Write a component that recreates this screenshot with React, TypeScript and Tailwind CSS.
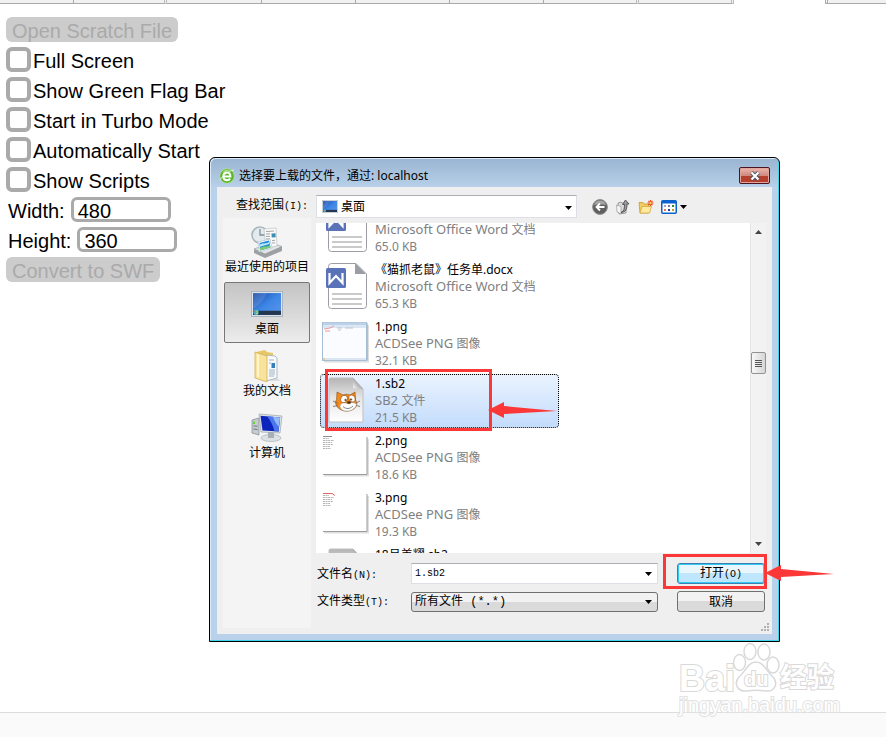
import React from "react";

const UI = "font-['Noto_Sans','Noto_Sans_CJK_SC',sans-serif]";
const MONO = "font-['Liberation_Mono','Noto_Sans_CJK_SC',monospace]";

function TabStrip() {
  const single = "border-r";
  const double = "border-r-[3px] border-r-[#bbbbbb] [border-right-style:double]";
  const tabs = [
    `w-[74px] ${single}`,
    `w-[93px] ${double}`,
    `w-[95px] ${single}`,
    `w-[94px] ${single}`,
    `w-[94px] ${single}`,
    `w-[94px] ${single}`,
    `w-[95px] ${double}`,
    `w-[95px] ${double}`,
  ];
  return (
    <div className="flex h-1 overflow-hidden">
      {tabs.map((w, i) => (
        <div key={i} className={`${w} shrink-0 border-b border-[#aaaaaa] bg-[#f1f1f1]`} />
      ))}
      <div className="w-[91px] shrink-0" />
      <div className="flex-1 border-b border-l-[3px] border-[#aaaaaa] bg-[#f1f1f1] [border-left-style:double]" />
    </div>
  );
}

function CheckRow({ id, label }: { id: string; label: string }) {
  return (
    <div className="flex h-[25px] items-center gap-0.5">
      <input id={id} type="checkbox" className="size-[25px] appearance-none rounded-md border-4 border-[#aaaaaa] bg-white" />
      <label htmlFor={id} className="pt-0.5 leading-6">{label}</label>
    </div>
  );
}

function SizeRow({ id, label, value }: { id: string; label: string; value: string }) {
  return (
    <div className="flex h-[25px] items-center gap-1.5 pl-0.5">
      <label htmlFor={id} className="pt-0.5 leading-6">{label}</label>
      <input id={id} type="text" defaultValue={value} className="h-[25px] w-[100px] rounded-md border-[3px] border-[#aaaaaa] bg-white px-1 pt-0.5" />
    </div>
  );
}

function ConverterForm() {
  const button = "h-[25px] rounded-md bg-[#cccccc] px-1.5 pt-0.5 leading-6 text-[#aaaaaa]";
  return (
    <form className="flex flex-col items-start gap-[5px] px-1.5 pt-[13px] font-['Liberation_Sans',Arial,sans-serif] text-xl text-black">
      <button type="button" disabled className={button}>Open Scratch File</button>
      <CheckRow id="full" label="Full Screen" />
      <CheckRow id="flag" label="Show Green Flag Bar" />
      <CheckRow id="turbo" label="Start in Turbo Mode" />
      <CheckRow id="auto" label="Automatically Start" />
      <CheckRow id="scripts" label="Show Scripts" />
      <SizeRow id="width" label="Width:" value="480" />
      <SizeRow id="height" label="Height:" value="360" />
      <button type="button" disabled className={button}>Convert to SWF</button>
    </form>
  );
}

function BrowserIcon() {
  return (
    <svg width="16" height="16" viewBox="0 0 16 16">
      <circle cx="8" cy="8" r="7.6" fill="#eaf6e4" stroke="#a9c8a0" strokeWidth=".6" />
      <circle cx="8" cy="8" r="7" fill="#58b82c" />
      <path d="M3 5a6 6 0 0 1 8-2.500C8 3 5 4 3 5z" fill="#a9e07c" />
      <path d="M4.300 8.400h7.100C11.300 3.200 4.300 3.200 4.300 8.400c0 4 4.600 4.700 6.900 2.400" fill="none" stroke="#fff" strokeWidth="2" />
      <path d="M1 12C3 8 9 3 15 2" fill="none" stroke="#e4f7d8" strokeWidth=".9" />
    </svg>
  );
}

function DesktopIcon({ className }: { className: string }) {
  return (
    <svg className={className} viewBox="0 0 32 25" preserveAspectRatio="none">
      <defs>
        <linearGradient id="desk" x1="0" y1="0" x2="1" y2="1">
          <stop offset="0" stopColor="#1747a5" />
          <stop offset=".5" stopColor="#3d86e6" />
          <stop offset="1" stopColor="#5c95e8" />
        </linearGradient>
      </defs>
      <rect x=".5" y=".5" width="31" height="24" fill="#dfe5ec" stroke="#aab4c0" />
      <rect x="2" y="2" width="28" height="21" fill="url(#desk)" />
      <path d="M2 3v14C8 14 13 8 16 2H2z" fill="#fff" opacity=".12" />
      <rect x="2" y="19" width="28" height="4" fill="#23364e" />
      <circle cx="5" cy="20.500" r="2.700" fill="#3daed0" />
      <path d="M3.500 19h1.500v1.500H3.500z" fill="#f26a3a" />
      <path d="M5.300 19h1.500v1.500H5.300z" fill="#a5d842" />
      <path d="M5.300 21h1.500v1.300H5.300z" fill="#ffd83a" />
    </svg>
  );
}

function RecentIcon() {
  return (
    <svg width="32" height="32" viewBox="0 0 32 32">
      <path d="M3 24l17-6 11 3v4l-17 7L3 27z" fill="#9da1a4" />
      <path d="M3 23l17-6 11 3.500L14 28z" fill="#e4e6e7" stroke="#8b9093" strokeWidth=".6" />
      <circle cx="9" cy="9" r="8" fill="#e3ebee" stroke="#a9b6bc" strokeWidth="1.600" />
      <path d="M9 3v6h5" fill="none" stroke="#7b919c" strokeWidth="1.300" />
      <path d="M13 3l12-1 1 18-11 2z" fill="#fafafa" stroke="#b5babd" strokeWidth=".6" />
      <path d="M15 5.500l8-.5M15 8l4-.2M15 10.500l4-.2M15 13l4-.2M21 14.500l3-.2M21 17l3-.2" stroke="#999" strokeWidth=".9" />
      <path d="M20.500 7.500l4-.3.200 4-4 .3z" fill="#3d8eb4" />
      <path d="M7 16l12-3 2 9-13 4z" fill="#f5fbff" stroke="#a7bdc8" strokeWidth=".6" />
      <path d="M8.500 17l9.500-2.500 1.500 7-10.500 3z" fill="#1e89d2" />
      <path d="M9 22c4-3 6 0 10-3l.5 2.500-10.500 3z" fill="#7ecb74" />
      <path d="M8.800 18.500c4-2 5 0 9.200-2.500v2c-4 2-6 1-9 3z" fill="#b6e7fa" />
    </svg>
  );
}

function DocumentsIcon() {
  return (
    <svg width="32" height="32" viewBox="0 0 32 32">
      <path d="M22 28h4l4 3H14z" fill="#dddddd" />
      <path d="M5 2l9-2 2 2 6 1v23L9 29z" fill="#e8c766" />
      <path d="M15 5l9 1 2 2v20l-11 3z" fill="#f7f9fa" stroke="#9daeb9" strokeWidth=".8" />
      <path d="M18 10h5M18 13h2M18 20h6M18 22h6M18 24h6M18 26h5" stroke="#9eb3c0" />
      <path d="M20.500 13H24v5h-3.500z" fill="#337db8" />
      <path d="M4 2l12 4v26L4 28z" fill="#f9e29b" stroke="#d2b154" strokeWidth=".8" />
      <path d="M6 4l2 .5v23l-2-.7z" fill="#fff5ca" />
    </svg>
  );
}

function ComputerIcon() {
  return (
    <svg width="32" height="30" viewBox="0 0 32 30">
      <path d="M1 7l7-2v17l-7-2z" fill="#c5cbd0" stroke="#7f898f" strokeWidth=".7" />
      <path d="M2.500 13l4 .2M2.500 16l4 .5" stroke="#6d767c" />
      <path d="M2 8.500h2V11H2z" fill="#5bdb24" />
      <ellipse cx="20" cy="25" rx="10" ry="3.500" fill="#dde1e4" stroke="#9ea8ad" strokeWidth=".6" />
      <path d="M17 19h6v6h-6z" fill="#a8b0b5" />
      <path d="M8 1l23 2-2 17-19-1z" fill="#dee3e6" stroke="#8e999f" strokeWidth=".6" />
      <path d="M9.500 2.700l19.700 1.800L27.500 18.500l-16-1z" fill="#0c25bd" />
      <path d="M16 3.300l13 1.200-1.500 14-4-.3C22 12 19 7 16 3.300z" fill="#4c76ea" />
      <path d="M22 3.900l7 .6-1 9C25 11 23 7 22 3.900z" fill="#91baff" />
    </svg>
  );
}

function WordIcon() {
  return (
    <svg width="46" height="50" viewBox="0 0 46 50" className="mt-px">
      <path d="M7.500 4.500a3 3 0 0 1 3-3H35L45.500 12v31.500a3 3 0 0 1-3 3h-32a3 3 0 0 1-3-3z" fill="#fff" stroke="#9b9da4" />
      <path d="M34 1l11 11H34z" fill="#9b9da4" />
      <rect x="5" y="6" width="20" height="20" rx="1.500" fill="#5a73b8" />
      <path d="M8.500 11v10l6.500-7 6.500 7V11" fill="none" stroke="#fff" strokeWidth="2.200" />
      <path d="M11 32h30M11 37h30M11 42h30" stroke="#cacaca" strokeWidth="2" />
    </svg>
  );
}

function ScratchFileIcon({ cat = true }: { cat?: boolean }) {
  return (
    <svg width="46" height="48" viewBox="0 0 46 48" className="mt-0.5">
      <defs>
        <linearGradient id="paper" x1="0" y1="0" x2="0" y2="1">
          <stop offset="0" stopColor="#b4b4b4" />
          <stop offset=".45" stopColor="#e6e6e6" />
          <stop offset="1" stopColor="#ffffff" />
        </linearGradient>
        <linearGradient id="fold" x1="0" y1="1" x2="1" y2="0">
          <stop offset="0" stopColor="#ffffff" />
          <stop offset="1" stopColor="#555555" />
        </linearGradient>
      </defs>
      <path d="M9 1h23l10 11v33H8V2z" fill="url(#paper)" stroke="#c0c0c0" />
      <path d="M32 1l10 11-10-1z" fill="url(#fold)" />
      {cat && (
        <g stroke="#8a4a12" strokeWidth=".6" strokeLinejoin="round">
          <path d="M16 15l6 3c2.500-1 5-1 7 0l5-3 .6 8c3 5 0 9-5 10.500-6 2-13-1-14.600-6-.8-3 0-4 .6-5z" fill="#f4891c" />
          <path d="M19 29c1-3 4-4 7-2.500 3-2 8-1 9.500 1-1 4-5 6.500-9.500 6.500-4 0-7-2-7-5z" fill="#fff" stroke="#a9a9a9" />
          <ellipse cx="23" cy="22" rx="3.200" ry="3.800" transform="rotate(20 23 22)" fill="#fff" />
          <ellipse cx="31" cy="21.500" rx="3" ry="3.600" transform="rotate(-20 31 21.500)" fill="#fff" />
          <circle cx="24.500" cy="23" r=".8" fill="#222" />
          <circle cx="30" cy="22.500" r=".8" fill="#222" />
          <ellipse cx="28" cy="25.500" rx="1.800" ry="1.200" fill="#4a2b12" />
          <path d="M12 24l5 2.500M12 29.500l5-1M35 26l4-2M35.500 28.500l3.500 1M22 29.500c3 3 7 2.500 10-.5" fill="none" stroke="#666" strokeWidth=".8" />
        </g>
      )}
    </svg>
  );
}

function Thumb({ kind }: { kind: string }) {
  return (
    <svg width="48" height="46" viewBox="0 0 48 46" className="mt-0.5">
      <path d="M3 41.500h44V5" fill="none" stroke="#dedede" strokeWidth="2" />
      <path d="M2 40.500h44V3" fill="none" stroke="#9c9c9c" />
      {kind === "window" ? (
        <g>
          <rect x="1.500" y="2.500" width="44" height="38" fill="#fbfcff" stroke="#a5bed6" />
          <path d="M2 4h43" stroke="#bdd2e9" strokeWidth="3" />
          <path d="M2 7h43M2 39h43" stroke="#dae6f4" strokeWidth="2" />
          <path d="M3 9l6-1 4-2M4 11h5" stroke="#ee9696" fill="none" />
          <path d="M16 8h5M24 8h8M17 10h3" stroke="#bdc4cf" />
          <path d="M2 39h2" stroke="#edb83b" />
        </g>
      ) : (
        <g stroke="#b6b6b6">
          <path d="M2 2.500h9" stroke="#8e8e8e" />
          <path d="M2 4.500h6M2 6.500h11M2 8.500h9M2 10.500h10M2 12.500h7M2 14.500h8" strokeDasharray="2 .6" />
          {kind === "red" && <path d="M2 2.500h9l3 2" fill="none" stroke="#dc6565" />}
        </g>
      )}
    </svg>
  );
}

function CaretDown({ className }: { className: string }) {
  return (
    <svg width="7" height="4" viewBox="0 0 7 4" className={className}>
      <path d="M0 0h7L3.500 4z" fill="currentColor" />
    </svg>
  );
}

const files = [
  { name: "《猫抓老鼠》学习单.docx", app: "Microsoft Office Word", kind: "文档", size: "65.0 KB", icon: <WordIcon /> },
  { name: "《猫抓老鼠》任务单.docx", app: "Microsoft Office Word", kind: "文档", size: "65.3 KB", icon: <WordIcon /> },
  { name: "1.png", app: "ACDSee PNG", kind: "图像", size: "32.1 KB", icon: <Thumb kind="window" /> },
  { name: "1.sb2", app: "SB2", kind: "文件", size: "21.5 KB", icon: <ScratchFileIcon />, selected: true },
  { name: "2.png", app: "ACDSee PNG", kind: "图像", size: "18.6 KB", icon: <Thumb kind="gray" /> },
  { name: "3.png", app: "ACDSee PNG", kind: "图像", size: "19.3 KB", icon: <Thumb kind="red" /> },
  { name: "18吕美耀.sb2", app: "SB2", kind: "文件", size: "20.1 KB", icon: <ScratchFileIcon cat={false} /> },
];

function FileList() {
  return (
    <div className="flex h-[330px] overflow-hidden bg-white">
      <ul className="-mt-5 flex flex-1 flex-col gap-[3px] pl-1">
        {files.map((f) => (
          <li
            key={f.name}
            className={`flex h-[54px] w-[239px] shrink-0 rounded-sm border ${
              f.selected ? "border-dotted border-black bg-linear-to-b from-[#eaf3fe] to-[#c3dcfc]" : "border-transparent"
            }`}
          >
            <div className="flex w-[54px] shrink-0">{f.icon}</div>
            <div className="text-xs leading-[17px] whitespace-nowrap text-[#808080]">
              <p className="text-black">{f.name}</p>
              <p className="h-[17px]">
                <span className="text-[13px] leading-[17px]">{f.app} </span>
                {f.kind}
              </p>
              <p>{f.size}</p>
            </div>
          </li>
        ))}
      </ul>
      <div className="flex w-4 flex-col items-center border-l border-[#e6e6e6] bg-[#f2f2f2] py-[7px] text-[#444444]">
        <CaretDown className="rotate-180" />
        <div className="mt-[118px] flex h-[22px] w-[15px] flex-col items-center justify-center gap-px rounded-xs border border-[#929292] bg-linear-to-r from-[#f8f8f8] to-[#d6d6d6]">
          <span className="h-px w-[7px] bg-[#555555]" />
          <span className="h-px w-[7px] bg-[#555555]" />
          <span className="h-px w-[7px] bg-[#555555]" />
          <span className="h-px w-[7px] bg-[#555555]" />
        </div>
        <CaretDown className="mt-auto" />
      </div>
    </div>
  );
}

function Places() {
  const places = [
    { label: "最近使用的项目", icon: <RecentIcon /> },
    { label: "桌面", icon: <DesktopIcon className="h-[26px] w-8" />, active: true },
    { label: "我的文档", icon: <DocumentsIcon /> },
    { label: "计算机", icon: <ComputerIcon /> },
  ];
  return (
    <nav className="flex w-[88px] shrink-0 flex-col gap-px bg-[#f4f4f4] px-px pt-0.5 text-xs">
      {places.map((p) => (
        <button
          key={p.label}
          type="button"
          className={`flex h-[61px] flex-col items-center rounded-xs border pt-1 leading-[18px] whitespace-nowrap ${
            p.active ? "border-[#777777] bg-linear-to-b from-[#c4c4c4] to-[#ececec]" : "border-transparent"
          }`}
        >
          <span className="flex h-[33px] items-center justify-center">{p.icon}</span>
          {p.label}
        </button>
      ))}
    </nav>
  );
}

function Toolbar() {
  return (
    <div className="flex items-center gap-[7px] pl-[15px]">
      <button type="button" aria-label="返回">
        <svg width="16" height="16" viewBox="0 0 16 16">
          <circle cx="8" cy="8" r="7.400" fill="#606060" stroke="#8e8e8e" />
          <path d="M2 6a6.300 6.300 0 0 1 12 0c-4-1-8-1-12 0z" fill="#a5a5a5" />
          <path d="M12.500 8H5M8 4.500L4.500 8 8 11.500" fill="none" stroke="#fff" strokeWidth="1.800" />
        </svg>
      </button>
      <button type="button" aria-label="向上">
        <svg width="16" height="16" viewBox="0 0 16 16">
          <path d="M3 4l3-1 1 1h4v10l-7 1z" fill="#dcdcdc" stroke="#888" strokeWidth=".8" />
          <path d="M1.500 6L6 7.500V15l-4-2z" fill="#f4f4f4" stroke="#999" strokeWidth=".7" />
          <path d="M6 13.500c3-1 3.500-4 3.500-8H7.500L10.500 1 14 5h-2c0 5-1 8-6 8.500z" fill="#999" stroke="#444" strokeWidth=".8" />
        </svg>
      </button>
      <button type="button" aria-label="新建文件夹">
        <svg width="16" height="16" viewBox="0 0 16 16">
          <path d="M1 3.500h4l1 1.500h4.500v9H2z" fill="#f2cb61" stroke="#c79b32" strokeWidth=".8" />
          <path d="M2 14l2-6.500h9.500l-2 6.500z" fill="#ffeaa0" stroke="#d2a83b" strokeWidth=".8" />
          <path d="M12.500 1v6M9.500 4h6M10.500 2l4 4M14.500 2l-4 4" stroke="#ef4b23" strokeWidth="1.200" />
          <circle cx="12.500" cy="4" r="1.200" fill="#ffd45d" />
        </svg>
      </button>
      <button type="button" aria-label="视图" className="flex items-center gap-[3px]">
        <svg width="16" height="14" viewBox="0 0 16 14">
          <rect x=".75" y=".75" width="14.500" height="12.500" rx="1" fill="#fff" stroke="#0b61ce" strokeWidth="1.500" />
          <path d="M1 1h14v2.500H1z" fill="#0b61ce" />
          <path d="M3 5h2v2H3z" fill="#a69fd7" />
          <path d="M7 5h2v2H7z" fill="#777ba9" />
          <path d="M11 5h2v2h-2z" fill="#23922e" />
          <path d="M3 9h2v2H3z" fill="#f46f52" />
          <path d="M7 9h2v2H7z" fill="#1c3b93" />
          <path d="M11 9h2v2h-2z" fill="#c59c1d" />
        </svg>
        <CaretDown className="" />
      </button>
    </div>
  );
}

function DialogFields() {
  const label = `w-[95px] pl-px text-xs ${UI}`;
  const mono = `${MONO} text-[10px]`;
  return (
    <div className="flex flex-col gap-[7px] pt-2.5 pr-px">
      <div className="flex h-[21px] items-center">
        <label htmlFor="filename" className={`${label} pt-0.5`}>文件名<span className={mono}>(N):</span></label>
        <div className="relative w-[247px]">
          <input id="filename" type="text" defaultValue="1.sb2" className={`block h-[21px] w-full border border-[#dcdfe6] border-t-[#abadb3] bg-white px-[3px] ${mono}`} />
          <CaretDown className="absolute top-[9px] right-1.5" />
        </div>
        <button type="button" className="ml-auto h-[21px] w-[88px] rounded-[3px] border border-[#3c7fb1] bg-linear-to-b from-[#eaf6fd] from-50% to-[#bee6fd] to-50% text-xs leading-4 inset-ring inset-ring-[#32cbf5]">
          打开<span className={mono}>(O)</span>
        </button>
      </div>
      <div className="flex h-[21px] items-center">
        <label htmlFor="filetype" className={label}>文件类型<span className={mono}>(T):</span></label>
        <div className="relative w-[247px]">
          <select id="filetype" className={`block h-5 w-full appearance-none rounded-[3px] border border-[#707070] bg-linear-to-b from-[#f2f2f2] from-50% to-[#dadada] to-50% px-[3px] text-xs leading-4 ${MONO}`}>
            <option>所有文件 (*.*)</option>
          </select>
          <CaretDown className="absolute top-2 right-1.5" />
        </div>
        <button type="button" className="ml-auto h-[21px] w-[88px] rounded-[3px] border border-[#707070] bg-linear-to-b from-[#f2f2f2] from-50% to-[#dadada] to-50% text-xs leading-4">
          取消
        </button>
      </div>
    </div>
  );
}

function FileDialog() {
  return (
    <section
      role="dialog"
      aria-label="选择要上载的文件"
      className={`absolute top-[157px] left-[209px] w-[571px] rounded-t-md border border-black bg-linear-to-b from-[#99b4d1] to-[#b9d1ea] to-[30px] px-[7px] pb-[7px] text-black shadow-[inset_-1px_-1px_0_#3fd5ec,inset_1px_1px_0_#dcebf8] ${UI}`}
    >
      <header className="flex h-[29px] items-center gap-1 pr-0.5 pl-0.5">
        <div className="pt-1.5"><BrowserIcon /></div>
        <h1 className="flex-1 pt-1.5 text-xs leading-4">选择要上载的文件，通过: localhost</h1>
        <button type="button" aria-label="关闭" className="mt-1.5 flex h-[17px] w-[31px] items-center justify-center rounded-xs border border-[#4b1420] bg-linear-to-b from-[#e6aea5] from-10% via-[#d08a80] via-50% to-[#b5402e] to-55% inset-ring inset-ring-[#e2a59b]">
          <svg width="12" height="10" viewBox="0 0 12 10">
            <path d="M2.500 1.500l7 7M9.500 1.500l-7 7" stroke="#4c5566" strokeWidth="4" />
            <path d="M2.500 1.500l7 7M9.500 1.500l-7 7" stroke="#fff" strokeWidth="2.200" />
          </svg>
        </button>
      </header>
      <div className="relative bg-[#efefef] px-1.5 pb-1.5">
        <div className="flex h-[31px] pt-2 pl-[13px]">
          <label htmlFor="lookin" className="w-20 text-xs leading-5">
            查找范围<span className={`${MONO} text-[10px]`}>(I):</span>
          </label>
          <div className="relative w-[261px]">
            <DesktopIcon className="absolute top-[5px] left-1.5 h-[13px] w-4" />
            <select id="lookin" className="block h-[23px] w-full appearance-none border border-[#dcdfe6] border-t-[#abadb3] bg-white pt-px pl-6 text-xs">
              <option>桌面</option>
            </select>
            <CaretDown className="absolute top-[11px] right-[5px]" />
          </div>
          <Toolbar />
        </div>
        <div className="flex gap-[5px]">
          <Places />
          <div className="flex h-[410px] flex-1 flex-col pt-[5px]">
            <FileList />
            <DialogFields />
          </div>
        </div>
        <svg width="9" height="9" viewBox="0 0 9 9" className="absolute right-0.5 bottom-0.5" fill="#b0b0b0">
          <path d="M6 0h2v2H6zM3 3h2v2H3zM6 3h2v2H6zM0 6h2v2H0zM3 6h2v2H3zM6 6h2v2H6z" />
        </svg>
      </div>
    </section>
  );
}

function Arrow({ className }: { className: string }) {
  return (
    <svg width="70" height="16" viewBox="0 0 70 16" className={className} fill="#fb3837">
      <path d="M0 8L16 0v4l53 5-53 3v4z" />
    </svg>
  );
}

function Watermark() {
  const outline = "absolute text-white [-webkit-text-stroke:2px_#d9d9d9] [paint-order:stroke]";
  return (
    <div aria-hidden="true" className="absolute top-[642px] left-[679px] h-[76px] w-[160px] font-['Liberation_Sans','Noto_Sans_CJK_SC',sans-serif] font-bold">
      <span className={`${outline} top-[19px] left-0 text-4xl leading-9`}>Bai</span>
      <svg width="50" height="52" viewBox="0 0 50 52" className="absolute top-0 left-[53px]" fill="#fff" stroke="#d9d9d9" strokeWidth="1.500">
        <ellipse cx="18" cy="9.500" rx="6" ry="8" />
        <ellipse cx="32" cy="10" rx="6" ry="8" />
        <ellipse cx="7.500" cy="20.500" rx="6" ry="8" />
        <ellipse cx="41" cy="23" rx="6" ry="8" />
        <path d="M24 20c8 0 10 9 17 15 6 7 1 15-7 14-6-1-13-1-19 0-9 1-14-7-8-14 7-6 9-15 17-15z" />
      </svg>
      <span className={`${outline} top-[27px] left-[65px] text-xl leading-5`}>du</span>
      <span className={`${outline} top-[18px] left-[101px] text-[27px] leading-9 whitespace-nowrap`}>经验</span>
      <span className="absolute top-[53px] left-0 text-xl leading-5 font-normal text-white [-webkit-text-stroke:2px_#e2e2e2] [paint-order:stroke]">jingyan.baidu.com</span>
    </div>
  );
}

export default function App() {
  return (
    <div className="relative flex min-h-screen flex-col overflow-hidden bg-white">
      <TabStrip />
      <main className="flex-1">
        <ConverterForm />
      </main>
      <footer className="h-[25px] border-t border-[#dddddd] bg-[#fafafa]" />
      <FileDialog />
      <div className="absolute top-[369px] left-[325px] h-[62px] w-[167px] border-[3px] border-[#fb3837]" />
      <Arrow className="absolute top-[402px] left-[488px]" />
      <div className="absolute top-[554px] left-[663px] h-[35px] w-[104px] border-[3px] border-[#fb3837]" />
      <Arrow className="absolute top-[565px] left-[765px]" />
      <Watermark />
    </div>
  );
}
